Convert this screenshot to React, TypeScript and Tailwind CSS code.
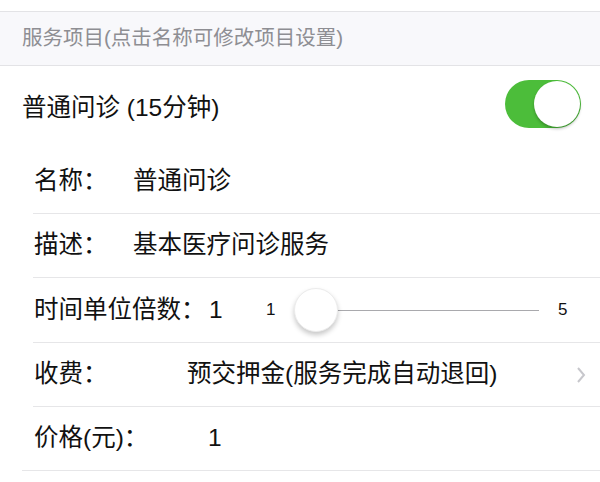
import React from "react";

const font = { fontFamily: '"Liberation Sans", "Noto Sans CJK SC", sans-serif' };

function Toggle() {
  return (
    <div className="relative w-[76px] h-[48px] rounded-full bg-[#4cbd3a]">
      <div className="absolute right-[1px] top-[1px] w-[46px] h-[46px] rounded-full bg-white shadow-[0_2px_3px_rgba(0,0,0,0.25)]" />
    </div>
  );
}

function Row({ children, last, h }: { children: React.ReactNode; last?: boolean; h?: string }) {
  return (
    <div
      className={
        "flex items-center border-b border-[#e6e6e8] " +
        (h === "65" ? "h-[65px] " : "h-[64px] ") +
        (last ? "ml-[22px] pl-[12px]" : "ml-[33px] pl-[1px]")
      }
    >
      {children}
    </div>
  );
}

export default function App() {
  return (
    <div className="w-[600px] h-[482px] bg-white text-[#111] overflow-hidden" style={font}>
      <div className="h-[11px]" />
      <div className="h-[55px] flex items-center pl-[22px] bg-[#f8f8fb] border-y border-[#e3e3e6] text-[20.5px] text-[#8e8e93]">
        服务项目(点击名称可修改项目设置)
      </div>
      <div className="h-[84px] flex items-center justify-between pl-[22px] pr-[19px]">
        <span className="text-[24.5px]">普通问诊 (15分钟)</span>
        <div className="mb-[8px]">
          <Toggle />
        </div>
      </div>
      <Row>
        <span className="w-[99px] text-[24.5px]">名称：</span>
        <span className="text-[24.5px]">普通问诊</span>
      </Row>
      <Row>
        <span className="w-[99px] text-[24.5px]">描述：</span>
        <span className="text-[24.5px]">基本医疗问诊服务</span>
      </Row>
      <Row h="65">
        <span className="w-[175px] text-[24.5px]">时间单位倍数：</span>
        <span className="w-[57px] text-[24.5px]">1</span>
        <span className="w-[28px] text-[17px]">1</span>
        <div className="relative flex items-center w-[245px] h-[44px]">
          <div className="absolute left-[22px] right-0 h-[1px] bg-[#a9a9ad]" />
          <div className="absolute left-0 w-[44px] h-[44px] rounded-full bg-white border border-[#ececec] shadow-[0_3px_5px_rgba(0,0,0,0.22)]" />
        </div>
        <span className="text-[17px] ml-[19px]">5</span>
      </Row>
      <Row>
        <span className="w-[153px] text-[24.5px]">收费：</span>
        <span className="text-[24.5px] flex-1">预交押金(服务完成自动退回)</span>
        <svg width="10" height="18" viewBox="0 0 10 18" className="mr-[14px]">
          <path d="M2 2 L8 9 L2 16" fill="none" stroke="#c7c7cc" strokeWidth="2" />
        </svg>
      </Row>
      <Row last>
        <span className="w-[174px] text-[24.5px]">价格(元)：</span>
        <span className="text-[24.5px]">1</span>
      </Row>
    </div>
  );
}
